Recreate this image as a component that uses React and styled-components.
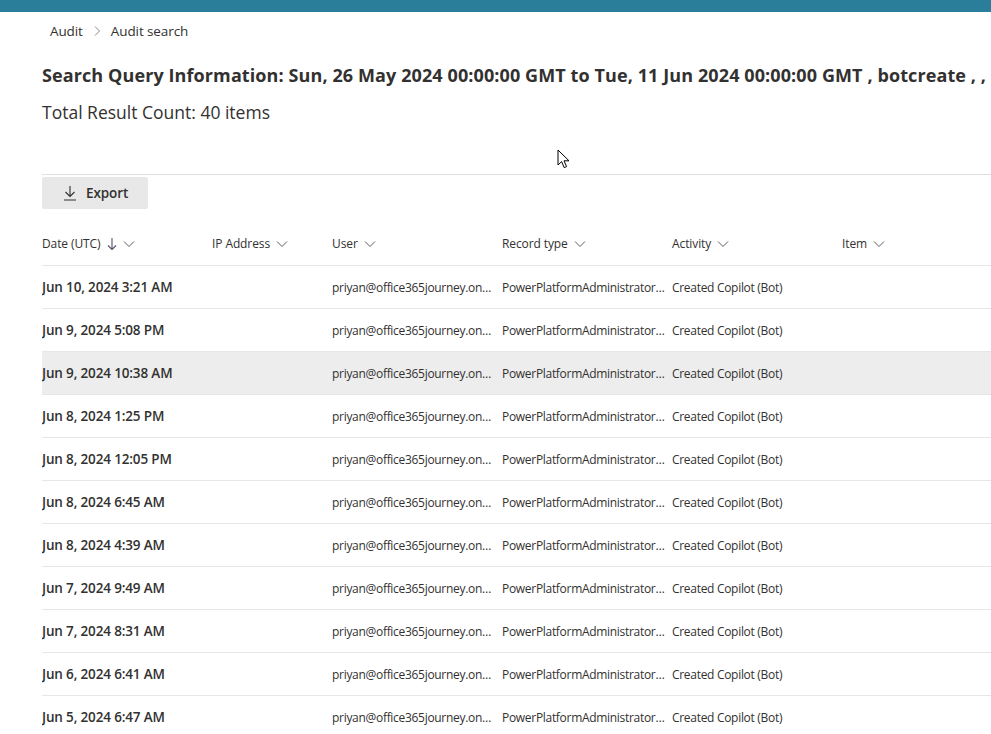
import React from "react";
import styled, { createGlobalStyle } from "styled-components";

const Global = createGlobalStyle`
  html, body {
    margin: 0;
    padding: 0;
    background: #ffffff;
    overflow: hidden;
  }
  body {
    font-family: "Open Sans", "Noto Sans", sans-serif;
    color: #323130;
  }
`;

const Page = styled.div`
  position: relative;
  width: 991px;
  height: 734px;
  overflow: hidden;
`;

const TopBar = styled.div`
  height: 12px;
  background: #2a7e99;
`;

const Breadcrumb = styled.nav`
  display: flex;
  align-items: center;
  gap: 10px;
  height: 38px;
  padding-left: 50px;
  font-size: 13.5px;
  color: #323130;
  letter-spacing: -0.1px;
`;

const Crumb = styled.span`
  color: #323130;
`;

const Content = styled.div`
  padding-left: 42px;
`;

const Title = styled.h1`
  margin: 13px 0 0;
  font-size: 18px;
  font-weight: 700;
  line-height: 24px;
  white-space: nowrap;
  letter-spacing: 0.1px;
  color: #323130;
`;

const Count = styled.div`
  margin-top: 13px;
  font-size: 17.5px;
  line-height: 24px;
  letter-spacing: 0;
  color: #323130;
`;

const Divider = styled.div`
  margin-top: 50px;
  height: 1px;
  background: #e1dfdd;
`;

const Toolbar = styled.div`
  display: flex;
  padding-top: 2px;
`;

const Button = styled.button`
  display: flex;
  align-items: center;
  gap: 9px;
  width: 106px;
  height: 32px;
  padding: 0 0 0 21px;
  border: none;
  border-radius: 2px;
  background: #e8e8e8;
  font-family: inherit;
  font-size: 13.5px;
  font-weight: 600;
  color: #323130;
  letter-spacing: -0.1px;
`;

const Table = styled.div`
  margin-top: 13px;
  width: 1100px;
`;

const Row = styled.div`
  display: grid;
  grid-template-columns: 170px 120px 170px 170px 170px 300px;
  align-items: center;
  height: ${({ header }) => (header ? "43px" : "42px")};
  border-bottom: 1px solid #e6e6e6;
  background: ${({ selected }) => (selected ? "#ededed" : "transparent")};
`;

const HeadCell = styled.div`
  display: flex;
  align-items: center;
  gap: 6px;
  font-size: 12px;
  font-weight: 500;
  letter-spacing: -0.1px;
  color: #323130;
`;

const Cell = styled.div`
  font-size: ${({ strong }) => (strong ? "13.5px" : "12px")};
  font-weight: ${({ strong }) => (strong ? 600 : 400)};
  letter-spacing: ${({ strong }) => (strong ? "-0.15px" : "-0.3px")};
  color: #323130;
  white-space: nowrap;
  overflow: hidden;
  text-overflow: ellipsis;
  padding-right: 6px;
`;

const Cursor = styled.svg`
  position: absolute;
  left: 557px;
  top: 149px;
`;

const Chevron = () => (
  <svg width="12" height="8" viewBox="0 0 12 8" fill="none">
    <path d="M1 1.5l5 5 5-5" stroke="#605e5c" strokeWidth="1" />
  </svg>
);

const SortDown = () => (
  <svg width="10" height="14" viewBox="0 0 10 14" fill="none">
    <path d="M5 1v11.5M1 8.5l4 4 4-4" stroke="#5c4f6b" strokeWidth="1.1" />
  </svg>
);

const ExportIcon = () => (
  <svg width="14" height="16" viewBox="0 0 14 16" fill="none">
    <path d="M7 1v10.5M2.5 7l4.5 4.5L11.5 7M1 15h12" stroke="#323130" strokeWidth="1.1" />
  </svg>
);

const BreadSep = () => (
  <svg width="8" height="12" viewBox="0 0 8 12" fill="none">
    <path d="M2 1.5l4.5 4.5L2 10.5" stroke="#8a8886" strokeWidth="1" />
  </svg>
);

const dates = [
  "Jun 10, 2024 3:21 AM",
  "Jun 9, 2024 5:08 PM",
  "Jun 9, 2024 10:38 AM",
  "Jun 8, 2024 1:25 PM",
  "Jun 8, 2024 12:05 PM",
  "Jun 8, 2024 6:45 AM",
  "Jun 8, 2024 4:39 AM",
  "Jun 7, 2024 9:49 AM",
  "Jun 7, 2024 8:31 AM",
  "Jun 6, 2024 6:41 AM",
  "Jun 5, 2024 6:47 AM",
];

const App = () => (
  <Page>
    <Global />
    <TopBar />
    <Breadcrumb>
      <Crumb>Audit</Crumb>
      <BreadSep />
      <Crumb>Audit search</Crumb>
    </Breadcrumb>
    <Content>
      <Title>
        Search Query Information: Sun, 26 May 2024 00:00:00 GMT to Tue, 11 Jun 2024 00:00:00 GMT , botcreate , ,
      </Title>
      <Count>Total Result Count: 40 items</Count>
      <Divider />
      <Toolbar>
        <Button>
          <ExportIcon />
          Export
        </Button>
      </Toolbar>
      <Table>
        <Row header>
          <HeadCell>
            Date (UTC) <SortDown /> <Chevron />
          </HeadCell>
          <HeadCell>
            IP Address <Chevron />
          </HeadCell>
          <HeadCell>
            User <Chevron />
          </HeadCell>
          <HeadCell>
            Record type <Chevron />
          </HeadCell>
          <HeadCell>
            Activity <Chevron />
          </HeadCell>
          <HeadCell>
            Item <Chevron />
          </HeadCell>
        </Row>
        {dates.map((d, i) => (
          <Row key={d} selected={i === 2}>
            <Cell strong>{d}</Cell>
            <Cell />
            <Cell>priyan@office365journey.onmicrosoft.com</Cell>
            <Cell>PowerPlatformAdministratorActivity</Cell>
            <Cell>Created Copilot (Bot)</Cell>
            <Cell />
          </Row>
        ))}
      </Table>
    </Content>
    <Cursor width="14" height="20" viewBox="0 0 14 20">
      <path d="M1 1v15l3.6-3.4 2.6 6 2.4-1-2.6-5.8H12z" fill="#fff" stroke="#000" strokeWidth="1" strokeLinejoin="round" />
    </Cursor>
  </Page>
);

export default App;
